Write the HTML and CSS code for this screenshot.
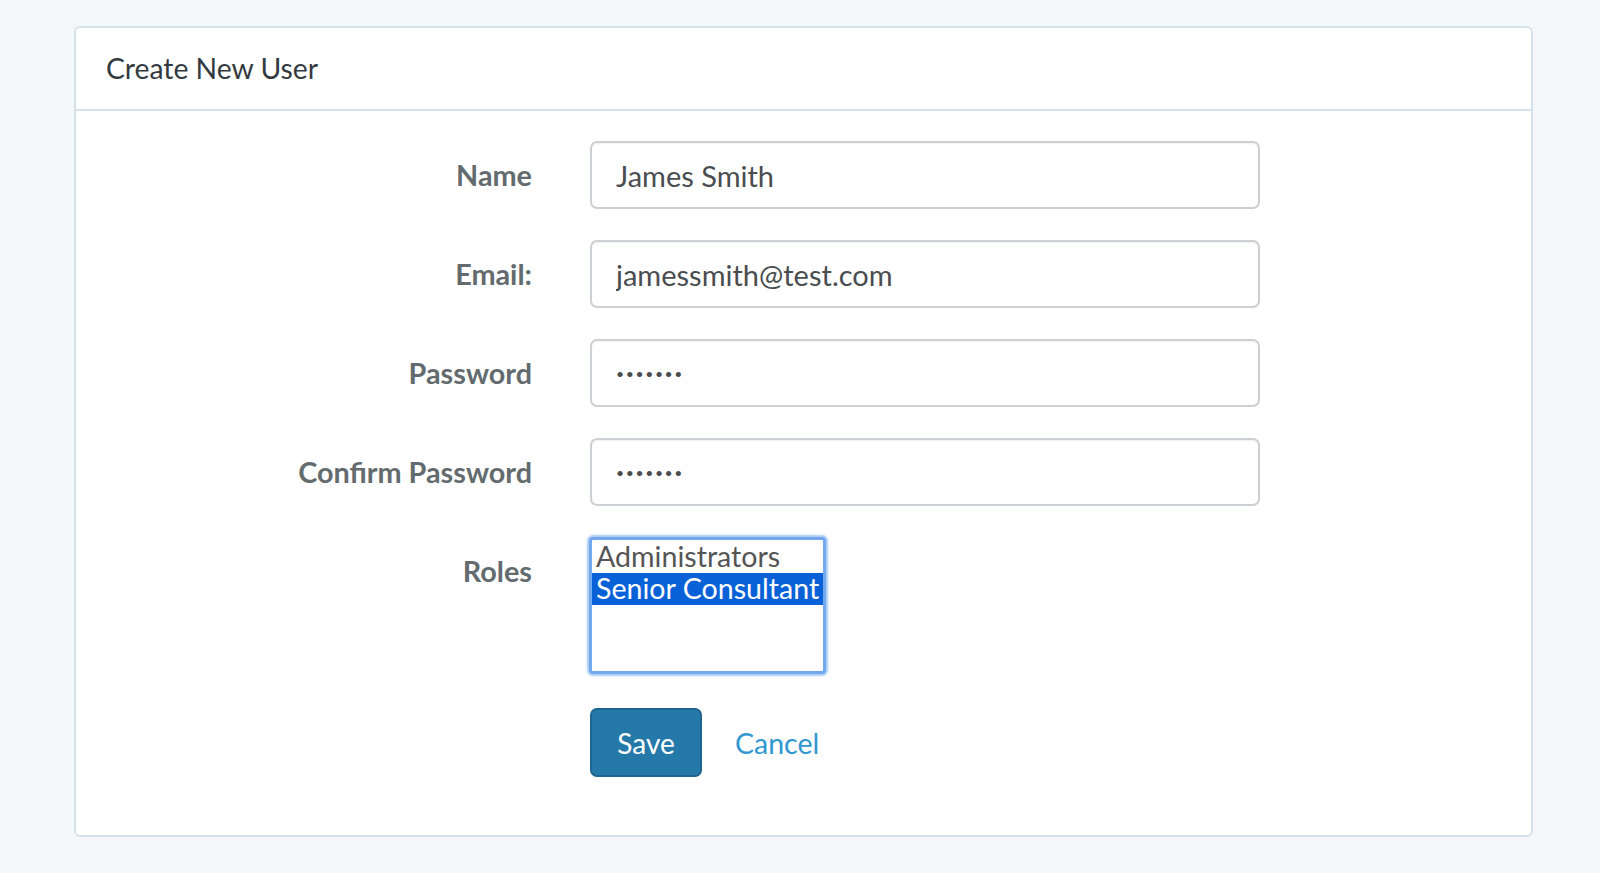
FILE: index.html
```html
<!DOCTYPE html>
<html lang="en">
<head>
<meta charset="utf-8">
<title>Create New User</title>
<link rel="stylesheet" href="styles.css">
</head>
<body>
<div class="card">
  <div class="card-header">Create New User</div>
  <div class="card-body">
    <form class="form">
      <div class="row">
        <label class="label">Name</label>
        <input class="input" type="text" value="James Smith">
      </div>
      <div class="row">
        <label class="label">Email:</label>
        <input class="input" type="text" value="jamessmith@test.com">
      </div>
      <div class="row">
        <label class="label">Password</label>
        <input class="input" type="password" value="secret1">
      </div>
      <div class="row">
        <label class="label">Confirm Password</label>
        <input class="input" type="password" value="secret1">
      </div>
      <div class="row row-top">
        <label class="label label-slot">Roles</label>
        <div class="listbox" role="listbox">
          <div class="option">Administrators</div>
          <div class="option selected">Senior Consultant</div>
        </div>
      </div>
      <div class="row row-actions">
        <div class="label-spacer"></div>
        <div class="actions">
          <button type="button" class="btn">Save</button>
          <a class="cancel" href="#">Cancel</a>
        </div>
      </div>
    </form>
  </div>
</div>
</body>
</html>
```

FILE: styles.css
```css
html, body {
  margin: 0;
  padding: 0;
}
body {
  background: #f5f8fa;
  font-family: Lato, "Open Sans", sans-serif;
  color: #333;
  height: 873px;
  overflow: hidden;
}
.card {
  box-sizing: border-box;
  margin: 26px 0 0 74px;
  width: 1459px;
  background: #fff;
  border: 2px solid #d6e2ea;
  border-radius: 6px;
}
.card-header {
  box-sizing: border-box;
  height: 83px;
  padding: 0 29px 2px 30px;
  display: flex;
  align-items: center;
  font-size: 28.3px;
  color: #333a3f;
  border-bottom: 2px solid #d6e2ea;
}
.card-body {
  padding: 30px 0 58px;
}
.form {
  display: flex;
  flex-direction: column;
  gap: 31px;
}
.row {
  display: flex;
  align-items: center;
  gap: 58px;
}
.row-top {
  align-items: flex-start;
}
.label {
  width: 456px;
  flex: none;
  text-align: right;
  font-weight: 700;
  font-size: 28.8px;
  color: #636b6f;
}
.label-slot {
  height: 68px;
  line-height: 68px;
}
.label-spacer {
  width: 456px;
  flex: none;
}
.input {
  box-sizing: border-box;
  width: 670px;
  height: 68px;
  border: 2px solid #ccd0d2;
  border-radius: 7px;
  padding: 0 24px;
  font-family: Lato, "Open Sans", sans-serif;
  font-size: 29px;
  color: #4a4d50;
  background: #fff;
  box-shadow: inset 0 1px 2px rgba(0,0,0,0.06);
  outline: none;
}
.input[type="password"] {
  font-size: 14px;
  letter-spacing: 1.6px;
}
.listbox {
  box-sizing: border-box;
  margin-left: -1px;
  width: 237px;
  height: 137px;
  border: 3px solid #74a8ee;
  border-radius: 4px;
  box-shadow: 0 0 2px 2px #aacbf6;
  background: #fff;
  padding: 1px 0;
  overflow: hidden;
}
.option {
  height: 32px;
  line-height: 30px;
  padding-left: 4px;
  font-size: 28.6px;
  color: #555;
  white-space: nowrap;
}
.option.selected {
  background: #0961d7;
  color: #fff;
}
.row-actions {
  margin-top: 3px;
}
.actions {
  display: flex;
  align-items: center;
  gap: 33px;
}
.btn {
  box-sizing: border-box;
  width: 112px;
  height: 69px;
  background: #2579a9;
  border: 2px solid #1f6591;
  border-radius: 7px;
  color: #fff;
  font-family: Lato, "Open Sans", sans-serif;
  font-size: 28px;
  padding: 0;
  cursor: pointer;
}
.cancel {
  color: #3097d1;
  text-decoration: none;
  font-size: 28.5px;
}
```
